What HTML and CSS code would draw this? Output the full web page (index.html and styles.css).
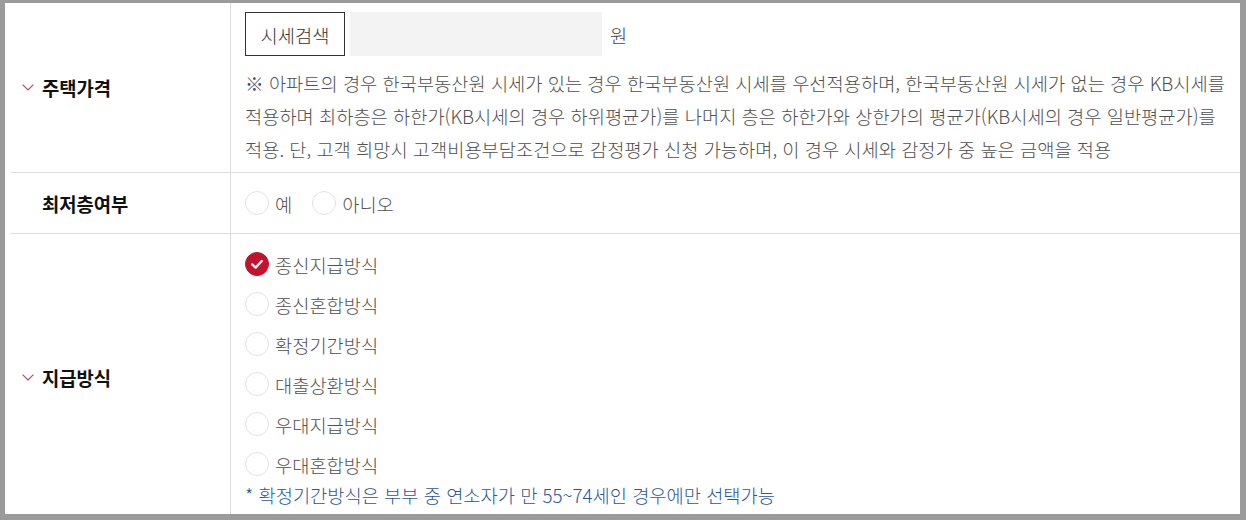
FILE: index.html
```html
<!DOCTYPE html>
<html lang="ko">
<head>
<meta charset="utf-8">
<title>주택연금 조건</title>
<link rel="stylesheet" href="styles.css">
</head>
<body>
<div class="frame">
  <div class="row row-price">
    <div class="label"><svg class="chev" viewBox="0 0 12 7" width="12" height="7"><polyline points="0.6,0.6 6,6 11.4,0.6"/></svg><span>주택가격</span></div>
    <div class="cell cell-price">
      <div class="search-line">
        <button class="btn" type="button">시세검색</button>
        <div class="input"></div>
        <span class="unit">원</span>
      </div>
      <p class="note">※ 아파트의 경우 한국부동산원 시세가 있는 경우 한국부동산원 시세를 우선적용하며, 한국부동산원 시세가 없는 경우 KB시세를 적용하며 최하층은 하한가(KB시세의 경우 하위평균가)를 나머지 층은 하한가와 상한가의 평균가(KB시세의 경우 일반평균가)를 적용. 단, 고객 희망시 고객비용부담조건으로 감정평가 신청 가능하며, 이 경우 시세와 감정가 중 높은 금액을 적용</p>
    </div>
  </div>
  <div class="row row-floor">
    <div class="label label-plain"><span>최저층여부</span></div>
    <div class="cell cell-floor">
      <label class="radio"><span class="dot"></span><span>예</span></label>
      <label class="radio"><span class="dot"></span><span>아니오</span></label>
    </div>
  </div>
  <div class="row row-pay">
    <div class="label"><svg class="chev" viewBox="0 0 12 7" width="12" height="7"><polyline points="0.6,0.6 6,6 11.4,0.6"/></svg><span>지급방식</span></div>
    <div class="cell cell-pay">
      <label class="radio opt"><span class="dot on"><svg viewBox="0 0 24 24" width="24" height="24"><polyline points="7.2,12.4 10.6,15.6 16.8,9"/></svg></span><span>종신지급방식</span></label>
      <label class="radio opt"><span class="dot"></span><span>종신혼합방식</span></label>
      <label class="radio opt"><span class="dot"></span><span>확정기간방식</span></label>
      <label class="radio opt"><span class="dot"></span><span>대출상환방식</span></label>
      <label class="radio opt"><span class="dot"></span><span>우대지급방식</span></label>
      <label class="radio opt"><span class="dot"></span><span>우대혼합방식</span></label>
      <p class="hint">* 확정기간방식은 부부 중 연소자가 만 55~74세인 경우에만 선택가능</p>
    </div>
  </div>
</div>
</body>
</html>
```

FILE: styles.css
```css
html, body {
  margin: 0;
  padding: 0;
  background: #fff;
}
body {
  font-family: "Noto Sans CJK KR", "Noto Sans", sans-serif;
  font-size: 18.7px;
  font-weight: 300;
  color: #505050;
  word-break: keep-all;
}
.frame {
  box-sizing: border-box;
  width: 1246px;
  height: 520px;
  overflow: hidden;
  border-style: solid;
  border-color: #9b9b9b;
  border-width: 3px 6px 6px 5px;
  padding-left: 6px;
  background: #fff;
}
.row {
  display: grid;
  grid-template-columns: 220px 1fr;
  border-bottom: 1px solid #dcdcdc;
}
.row-pay {
  border-bottom: none;
}
.label {
  display: flex;
  align-items: center;
  padding-left: 11px;
  border-right: 1px solid #dcdcdc;
  font-size: 18.8px;
  font-weight: 700;
  color: #111;
}
.label-plain {
  padding-left: 31px;
}
.chev {
  width: 12px;
  height: 7px;
  margin-right: 8px;
  fill: none;
  stroke: #b3475f;
  stroke-width: 1.1;
}
.cell {
  padding-left: 14px;
}
.cell-price {
  height: 169px;
  box-sizing: border-box;
  padding-top: 9px;
}
.search-line {
  display: flex;
  align-items: center;
  height: 44px;
}
.btn {
  box-sizing: border-box;
  width: 100px;
  height: 44px;
  border: 1px solid #333;
  background: #fff;
  font-family: inherit;
  font-size: 18.7px;
  font-weight: 300;
  color: #333;
  padding: 0;
}
.input {
  width: 252px;
  height: 44px;
  margin-left: 5px;
  background: #f3f3f3;
}
.unit {
  margin-left: 8px;
  color: #444;
}
.note {
  margin: 10px 0 0;
  line-height: 33px;
}
.cell-floor {
  height: 60px;
  display: flex;
  align-items: center;
  gap: 20px;
}
.radio {
  display: flex;
  align-items: center;
  gap: 6px;
}
.dot {
  box-sizing: border-box;
  width: 24px;
  height: 24px;
  border-radius: 50%;
  border: 1px solid #e2e2e2;
  background: #fff;
  flex: none;
}
.dot.on {
  background: #c3122d;
  border-color: #c3122d;
  display: flex;
  align-items: center;
  justify-content: center;
}
.dot.on svg {
  width: 24px;
  height: 24px;
  margin: -1px;
  fill: none;
  stroke: #fff;
  stroke-width: 2.4;
  stroke-linecap: round;
  stroke-linejoin: round;
}
.cell-pay {
  height: 286px;
  box-sizing: border-box;
  padding-top: 10px;
}
.opt {
  height: 40px;
}
.hint {
  margin: 0;
  line-height: 21px;
  color: #2b5795;
}
```
